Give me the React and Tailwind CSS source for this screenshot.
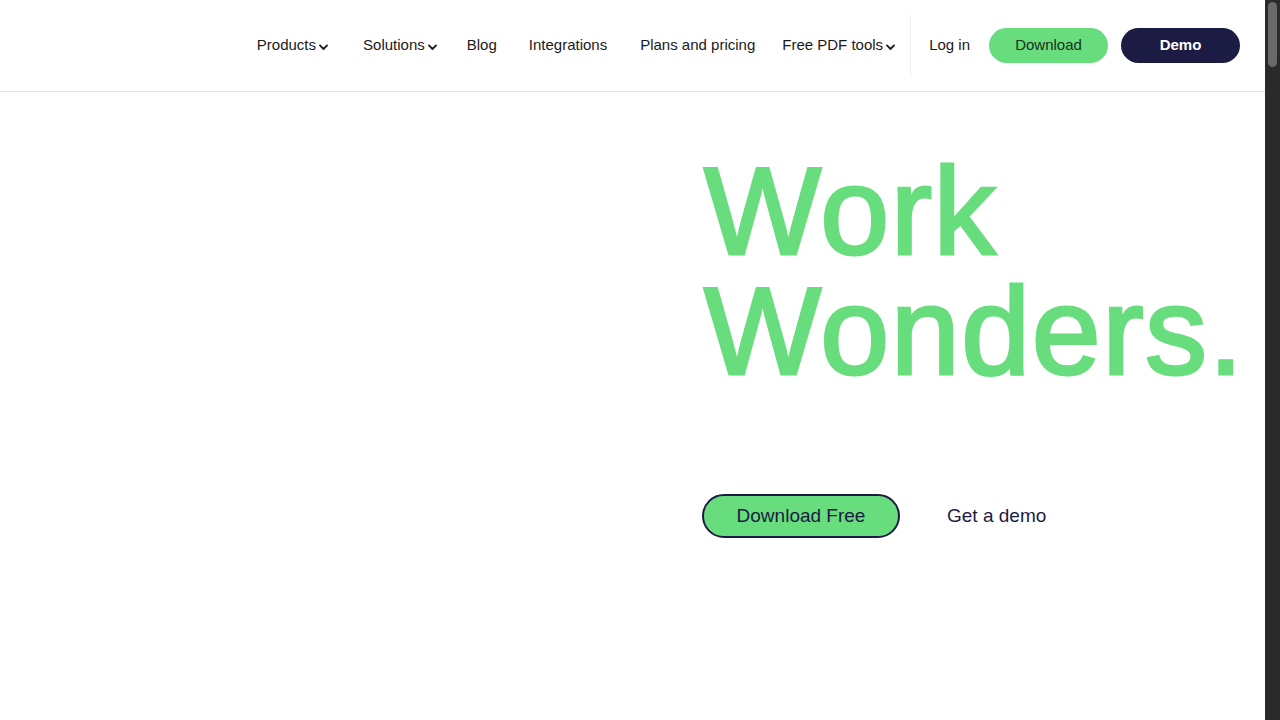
import React from "react";

const Chevron = () => (
  <svg width="9" height="7" viewBox="0 0 9 7" fill="none" className="ml-[3px] mt-[3px]">
    <path d="M1 1.4 L4.5 5 L8 1.4" stroke="#1a1a1a" strokeWidth="1.8" strokeLinecap="round" strokeLinejoin="round" />
  </svg>
);

const NavLink = ({ children, chevron, className = "" }) => (
  <a className={`flex items-center text-[15px] text-[#1a1a1a] whitespace-nowrap ${className}`}>
    {children}
    {chevron && <Chevron />}
  </a>
);

export default function App() {
  return (
    <div
      className="flex h-[720px] w-[1280px] overflow-hidden bg-white"
      style={{ fontFamily: '"Liberation Sans", Arial, sans-serif' }}
    >
      <div className="flex w-[1265px] flex-col">
        <header className="flex h-[92px] items-center justify-end border-b border-[#e3e3e3] pr-[25px]">
          <nav className="flex h-full items-center">
            <NavLink chevron>Products</NavLink>
            <NavLink chevron className="ml-[35px]">Solutions</NavLink>
            <NavLink className="ml-[30px]">Blog</NavLink>
            <NavLink className="ml-[32px]">Integrations</NavLink>
            <NavLink className="ml-[33px]">Plans and pricing</NavLink>
            <NavLink chevron className="ml-[27px]">Free PDF tools</NavLink>
            <div className="ml-[15px] h-[62px] w-px bg-[#f0f0f0]" />
            <NavLink className="ml-[18px]">Log in</NavLink>
            <button className="ml-[19px] flex h-[35px] w-[119px] items-center justify-center rounded-full bg-[#68dd7d] text-[15px] font-medium text-[#17301d]">
              Download
            </button>
            <button className="ml-[13px] flex h-[35px] w-[119px] items-center justify-center rounded-full bg-[#1c1b44] text-[15px] font-bold text-white">
              Demo
            </button>
          </nav>
        </header>

        <main className="flex flex-1 pl-[702px] pt-[59px]">
          <div className="flex flex-col">
            <h1 className="ml-[2px] text-[124px] font-normal leading-[120px] tracking-[1.5px] text-[#68dd7d] [-webkit-text-stroke:3px_#68dd7d]">
              Work
              <br />
              Wonders.
            </h1>
            <div className="mt-[103px] flex items-center">
              <button className="flex h-[44px] w-[198px] items-center justify-center rounded-full border-2 border-[#1c1b44] bg-[#68dd7d] text-[19px] text-[#1c1b44]">
                Download Free
              </button>
              <a className="ml-[47px] text-[19px] text-[#1c1b44]">Get a demo</a>
            </div>
          </div>
        </main>
      </div>

      <div className="flex w-[15px] justify-center bg-[#2a2a2a] pt-[2px]">
        <div className="h-[65px] w-[9px] rounded-full bg-[#6a6a6a]" />
      </div>
    </div>
  );
}
